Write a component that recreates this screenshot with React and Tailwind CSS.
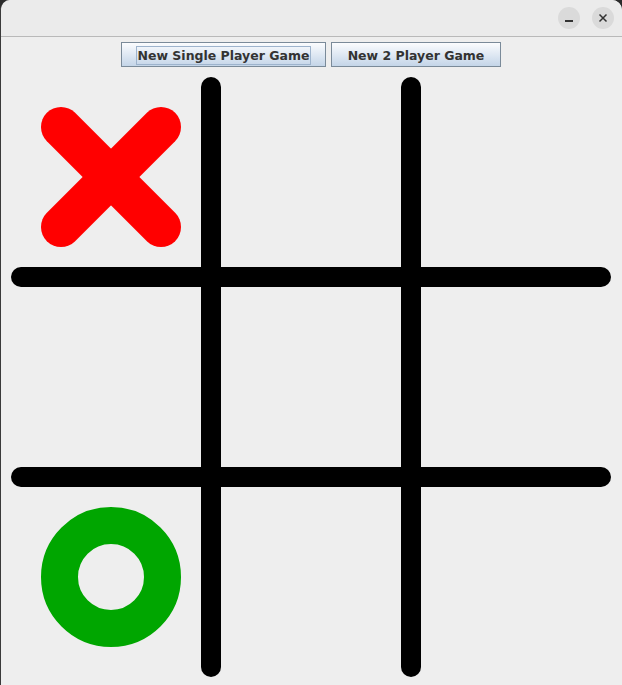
import React from "react";

function TitleButton({ children }) {
  return (
    <div className="w-[22px] h-[22px] rounded-full bg-[#dadada] flex items-center justify-center text-[#333]">
      {children}
    </div>
  );
}

function GameButton({ label, focused, width }) {
  return (
    <button
      className={`h-[25px] ${width} border border-[#7a8a99] bg-gradient-to-b from-[#fbfcfe] to-[#c4d5e8] flex items-center justify-center pt-[1px] text-[12.5px] font-bold text-[#333] font-['DejaVu_Sans',sans-serif]`}
    >
      <span className={focused ? "outline outline-1 outline-[#9db3cc] px-[1px] leading-[17px]" : "leading-[17px]"}>
        {label}
      </span>
    </button>
  );
}

function Board() {
  return (
    <svg width="622" height="600" viewBox="0 0 622 600" className="block">
      {/* grid */}
      <line x1="211" y1="10" x2="211" y2="590" stroke="#000" strokeWidth="20" strokeLinecap="round" />
      <line x1="411" y1="10" x2="411" y2="590" stroke="#000" strokeWidth="20" strokeLinecap="round" />
      <line x1="21" y1="200" x2="601" y2="200" stroke="#000" strokeWidth="20" strokeLinecap="round" />
      <line x1="21" y1="400" x2="601" y2="400" stroke="#000" strokeWidth="20" strokeLinecap="round" />
      {/* X */}
      <line x1="61" y1="50" x2="161" y2="150" stroke="#ff0000" strokeWidth="40" strokeLinecap="round" />
      <line x1="161" y1="50" x2="61" y2="150" stroke="#ff0000" strokeWidth="40" strokeLinecap="round" />
      {/* O */}
      <circle cx="111" cy="500" r="51.5" fill="none" stroke="#00a600" strokeWidth="37" />
    </svg>
  );
}

export default function App() {
  return (
    <div className="w-[622px] h-[685px] bg-[#2b2b2b] font-['DejaVu_Sans',sans-serif]">
      <div className="w-full h-full rounded-t-[10px] bg-[#eeeeee] border-l border-[#3a3a3a] overflow-hidden flex flex-col">
        <div className="h-[37px] bg-[#ebebeb] border-b border-[#b9b9b9] flex items-center justify-end gap-[12px] pr-[8px] shrink-0">
          <TitleButton>
            <span className="block w-[8px] h-[1.5px] bg-[#333] mt-[6px]" />
          </TitleButton>
          <TitleButton>
            <svg width="10" height="10" viewBox="0 0 10 10">
              <path d="M1.5 1.5 L8.5 8.5 M8.5 1.5 L1.5 8.5" stroke="#333" strokeWidth="1.5" />
            </svg>
          </TitleButton>
        </div>
        <div className="flex flex-col items-center pt-[5px]">
          <div className="flex gap-[5px] ml-[-1px]">
            <GameButton label="New Single Player Game" focused width="w-[205px]" />
            <GameButton label="New 2 Player Game" width="w-[170px]" />
          </div>
          <div className="mt-[10px] -ml-[1px]">
            <Board />
          </div>
        </div>
      </div>
    </div>
  );
}
